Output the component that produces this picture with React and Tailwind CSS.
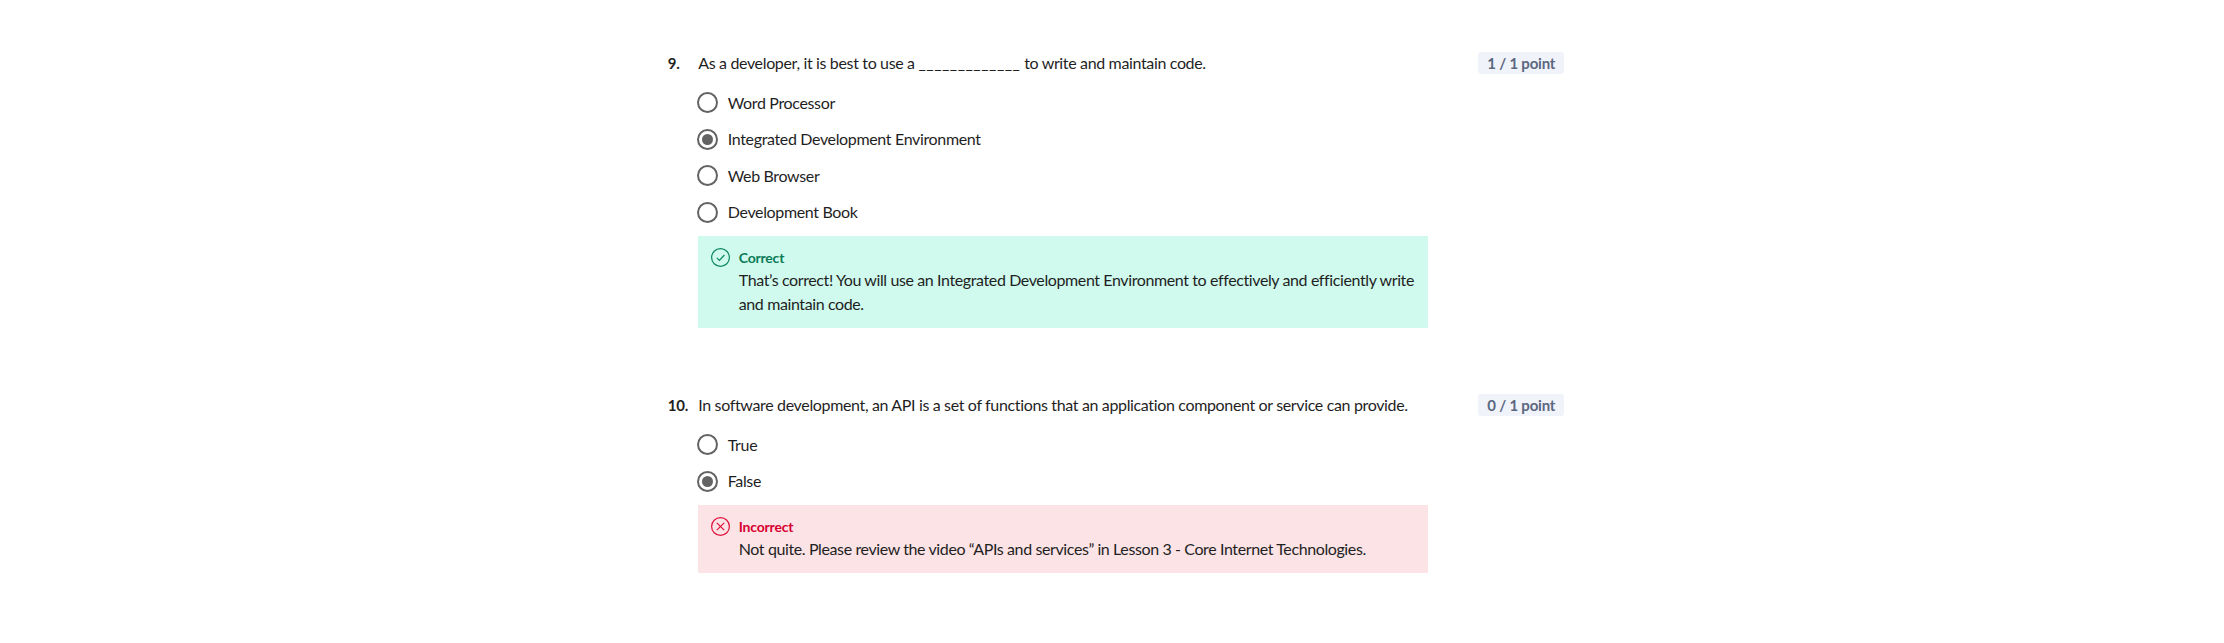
import React from "react";

function Radio({ checked }) {
  return (
    <span className="-ml-px flex h-[21px] w-[21px] shrink-0 items-center justify-center rounded-full border-2 border-[#636363] bg-white">
      {checked && <span className="h-[11px] w-[11px] rounded-full bg-[#636363]" />}
    </span>
  );
}

function Option({ label, checked }) {
  return (
    <div className="flex h-6 items-center gap-[9.5px]">
      <Radio checked={checked} />
      <span className="text-[#1f1f1f]">{label}</span>
    </div>
  );
}

function Feedback({ ok, children }) {
  return (
    <div className={`flex gap-[8.5px] py-3 pl-[13px] pr-2 ${ok ? "bg-[#cffaed]" : "bg-[#fbe3e6]"}`}>
      <svg
        width="19"
        height="19"
        viewBox="0 0 19 19"
        fill="none"
        stroke={ok ? "#0a8560" : "#e0103a"}
        strokeWidth="1.2"
        className="shrink-0"
      >
        <circle cx="9.5" cy="9.5" r="8.9" />
        {ok ? (
          <path d="M5.8 9.8l2.6 2.6 5-5.4" />
        ) : (
          <path d="M5.8 5.8l7.4 7.4M13.2 5.8l-7.4 7.4" />
        )}
      </svg>
      <div>
        <div className={`text-[14px] font-bold leading-[20px] tracking-[-0.2px] ${ok ? "text-[#0a7a57]" : "text-[#d8002f]"}`}>
          {ok ? "Correct" : "Incorrect"}
        </div>
        <div className="leading-6 tracking-[-0.39px] text-[#1f1f1f]">{children}</div>
      </div>
    </div>
  );
}

function Question({ num, text, score, options, children }) {
  return (
    <div className="flex items-start">
      <div className="w-[30.5px] shrink-0 text-[15px] font-bold leading-6 tracking-[-0.2px] text-[#1f1f1f]">{num}</div>
      <div className="w-[730px] shrink-0">
        <div className="leading-6 text-[#1f1f1f]">{text}</div>
        <div className="mt-[15.5px] flex flex-col gap-[12.5px]">
          {options.map((o) => (
            <Option key={o.label} label={o.label} checked={o.checked} />
          ))}
        </div>
        <div className="mt-[11.5px]">{children}</div>
      </div>
      <div className="ml-auto mt-px flex h-[22px] w-[86px] items-center justify-center rounded-[3px] bg-[#f0f3f9] text-[15px] font-bold tracking-[-0.2px] text-[#5b6780]">
        {score}
      </div>
    </div>
  );
}

export default function App() {
  return (
    <div className="flex min-h-[643px] justify-center bg-white font-['Lato','Noto_Sans',sans-serif] text-[16px] tracking-[-0.35px]">
      <div className="ml-[8px] flex w-[896.5px] flex-col gap-[65.5px] pt-[51px]">
        <Question
          num="9."
          text={
            <>
              As a developer, it is best to use a <span className="tracking-[0.5px]">_____________</span> to write and maintain code.
            </>
          }
          score="1 / 1 point"
          options={[
            { label: "Word Processor" },
            { label: "Integrated Development Environment", checked: true },
            { label: "Web Browser" },
            { label: "Development Book" },
          ]}
        >
          <Feedback ok>
            That’s correct! You will use an Integrated Development Environment to effectively and efficiently write and maintain code.
          </Feedback>
        </Question>
        <Question
          num="10."
          text="In software development, an API is a set of functions that an application component or service can provide."
          score="0 / 1 point"
          options={[{ label: "True" }, { label: "False", checked: true }]}
        >
          <Feedback>
            Not quite. Please review the video “APIs and services” in Lesson 3 - Core Internet Technologies.
          </Feedback>
        </Question>
      </div>
    </div>
  );
}
